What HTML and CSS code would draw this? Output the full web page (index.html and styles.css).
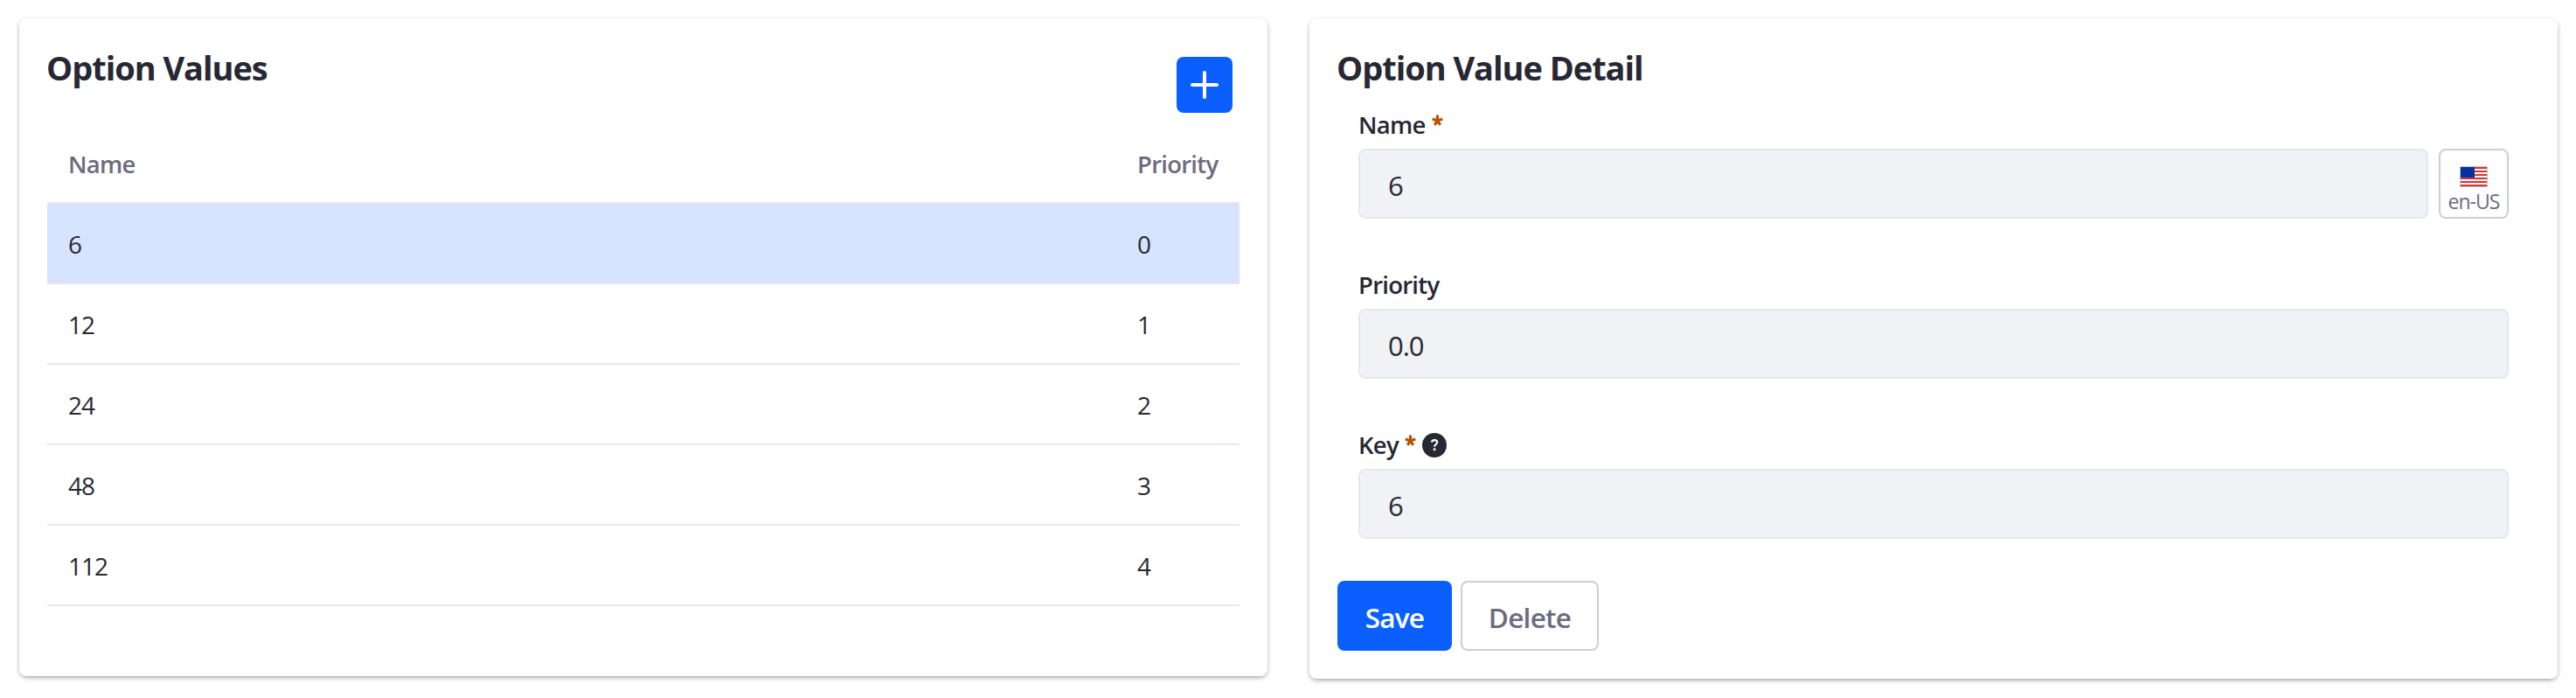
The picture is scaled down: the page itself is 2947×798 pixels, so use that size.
FILE: index.html
```
<!DOCTYPE html>
<html lang="en">
<head>
<meta charset="utf-8">
<title>Option Values</title>
<link rel="stylesheet" href="styles.css">
</head>
<body>
<main class="layout">
  <section class="card card-list">
    <header class="card-header">
      <h2 class="card-title">Option Values</h2>
      <button class="btn-add" type="button" aria-label="Add">
        <svg width="32" height="32" viewBox="0 0 32 32"><path d="M16 2v28M2 16h28" stroke="#fff" stroke-width="4" stroke-linecap="round"/></svg>
      </button>
    </header>
    <div class="table">
      <div class="row row-head"><span class="cell">Name</span><span class="cell cell-priority">Priority</span></div>
      <div class="row row-active"><span class="cell">6</span><span class="cell cell-priority">0</span></div>
      <div class="row"><span class="cell">12</span><span class="cell cell-priority">1</span></div>
      <div class="row"><span class="cell">24</span><span class="cell cell-priority">2</span></div>
      <div class="row"><span class="cell">48</span><span class="cell cell-priority">3</span></div>
      <div class="row"><span class="cell">112</span><span class="cell cell-priority">4</span></div>
    </div>
  </section>

  <section class="card card-detail">
    <h2 class="card-title">Option Value Detail</h2>
    <div class="fields">
      <div class="field">
        <div class="label">Name
          <svg class="required" width="13" height="13" viewBox="0 0 13 13"><path d="M6.5 7V.5M6.5 7L.7 5M6.5 7l5.8-2M6.5 7l-3.3 4.8M6.5 7l3.3 4.8" stroke="#b95000" stroke-width="3.1"/></svg>
        </div>
        <div class="input-group">
          <div class="input">6</div>
          <button class="btn-lang" type="button">
            <svg class="flag" width="32" height="24" viewBox="0 0 32 24" shape-rendering="crispEdges">
              <rect width="32" height="24" fill="#b9c6cc"/>
              <rect x="1" y="1" width="30" height="22" fill="#fff"/>
              <path d="M1 2h30M1 6h30M1 10h30M1 14h30M1 18h30M1 22h30" stroke="#e0312f" stroke-width="2"/>
              <rect x="1" y="1" width="16" height="12" fill="#0033a0"/>
            </svg>
            <span class="lang-code">en-US</span>
          </button>
        </div>
      </div>
      <div class="field">
        <div class="label">Priority</div>
        <div class="input">0.0</div>
      </div>
      <div class="field">
        <div class="label">Key
          <svg class="required" width="13" height="13" viewBox="0 0 13 13"><path d="M6.5 7V.5M6.5 7L.7 5M6.5 7l5.8-2M6.5 7l-3.3 4.8M6.5 7l3.3 4.8" stroke="#b95000" stroke-width="3.1"/></svg>
          <svg class="help" width="28" height="28" viewBox="0 0 28 28"><circle cx="14" cy="14" r="14" fill="#272833"/><path d="M10.9 10.6C11.2 8.9 12.5 8.1 14.1 8.1c1.8 0 3.1.9 3.1 2.5 0 2.3-3 2.1-3 5.2" fill="none" stroke="#fff" stroke-width="2.2"/><circle cx="14.1" cy="18.8" r="1.5" fill="#fff"/></svg>
        </div>
        <div class="input">6</div>
      </div>
    </div>
    <div class="actions">
      <button class="btn btn-primary" type="button">Save</button>
      <button class="btn btn-secondary" type="button">Delete</button>
    </div>
  </section>
</main>
</body>
</html>
```
FILE: styles.css
```
* {
  box-sizing: border-box;
}

body {
  margin: 0;
  background: #fff;
  color: #272833;
  font-family: "Open Sans", "Noto Sans", sans-serif;
}

button {
  font-family: inherit;
  margin: 0;
  padding: 0;
}

.layout {
  display: flex;
  align-items: flex-start;
  gap: 48px;
  padding: 21px 21px 22px 22px;
}

.card {
  width: 1428px;
  padding: 24px 32px 0;
  background: #fff;
  border-radius: 8px;
  box-shadow: 0 2px 6px -2px rgba(0, 0, 0, 0.6);
}

.card-list {
  height: 752px;
}

.card-detail {
  height: 755px;
}

.card-header {
  display: flex;
  justify-content: space-between;
  align-items: flex-start;
  height: 98px;
}

.card-title {
  height: 62px;
  margin: 0 0 0 -1px;
  font-size: 38px;
  font-weight: 700;
  line-height: 64px;
  letter-spacing: -1.05px;
}

.btn-add {
  display: flex;
  align-items: center;
  justify-content: center;
  width: 64px;
  height: 64px;
  margin: 20px 8px 0 0;
  border: 0;
  border-radius: 8px;
  background: #0b5fff;
}

.row {
  display: flex;
  justify-content: space-between;
  height: 92px;
  padding: 2px 0 0 24px;
  border-bottom: 2px solid #e7e7ed;
  font-size: 28px;
  line-height: 88px;
  letter-spacing: -1px;
}

.row-head {
  height: 90px;
  padding: 1px 0 0 24px;
  color: #6b6c7e;
  font-size: 27.5px;
  font-weight: 600;
  letter-spacing: -0.75px;
}

.row-active {
  background: #d6e4ff;
}

.cell-priority {
  width: 117px;
}

.fields {
  padding: 17px 24px 0;
}

.field {
  margin-bottom: 57px;
}

.field:last-child {
  margin-bottom: 48px;
}

.label {
  display: flex;
  align-items: flex-start;
  height: 36px;
  margin-bottom: 10px;
  font-size: 27.5px;
  font-weight: 600;
  line-height: 38px;
  letter-spacing: -0.75px;
}

.required {
  margin: 7px 0 0 7px;
}

.help {
  margin: 5px 0 0 7px;
}

.input-group {
  display: flex;
  gap: 12px;
}

.input {
  flex: 1;
  height: 80px;
  padding: 4px 32px 0;
  border: 2px solid #e7e7ed;
  border-radius: 8px;
  background: #f1f2f5;
  font-size: 31px;
  line-height: 72px;
  letter-spacing: -1px;
}

.btn-lang {
  display: flex;
  flex-direction: column;
  align-items: center;
  width: 80px;
  height: 80px;
  padding-top: 18px;
  border: 2px solid #cdcdd9;
  border-radius: 8px;
  background: #fff;
  color: #6b6c7e;
}

.flag {
  flex: none;
}

.lang-code {
  margin-top: 3px;
  font-size: 23px;
  line-height: 26px;
  letter-spacing: -1px;
}

.actions {
  display: flex;
  gap: 10px;
}

.btn {
  height: 80px;
  padding-top: 3px;
  border: 2px solid #0b5fff;
  border-radius: 8px;
  font-size: 31.5px;
  font-weight: 600;
  line-height: 72px;
  letter-spacing: -0.75px;
}

.btn-primary {
  width: 131px;
  background: #0b5fff;
  color: #fff;
}

.btn-secondary {
  width: 158px;
  border-color: #cdcdd9;
  background: #fff;
  color: #6b6c7e;
}
```
